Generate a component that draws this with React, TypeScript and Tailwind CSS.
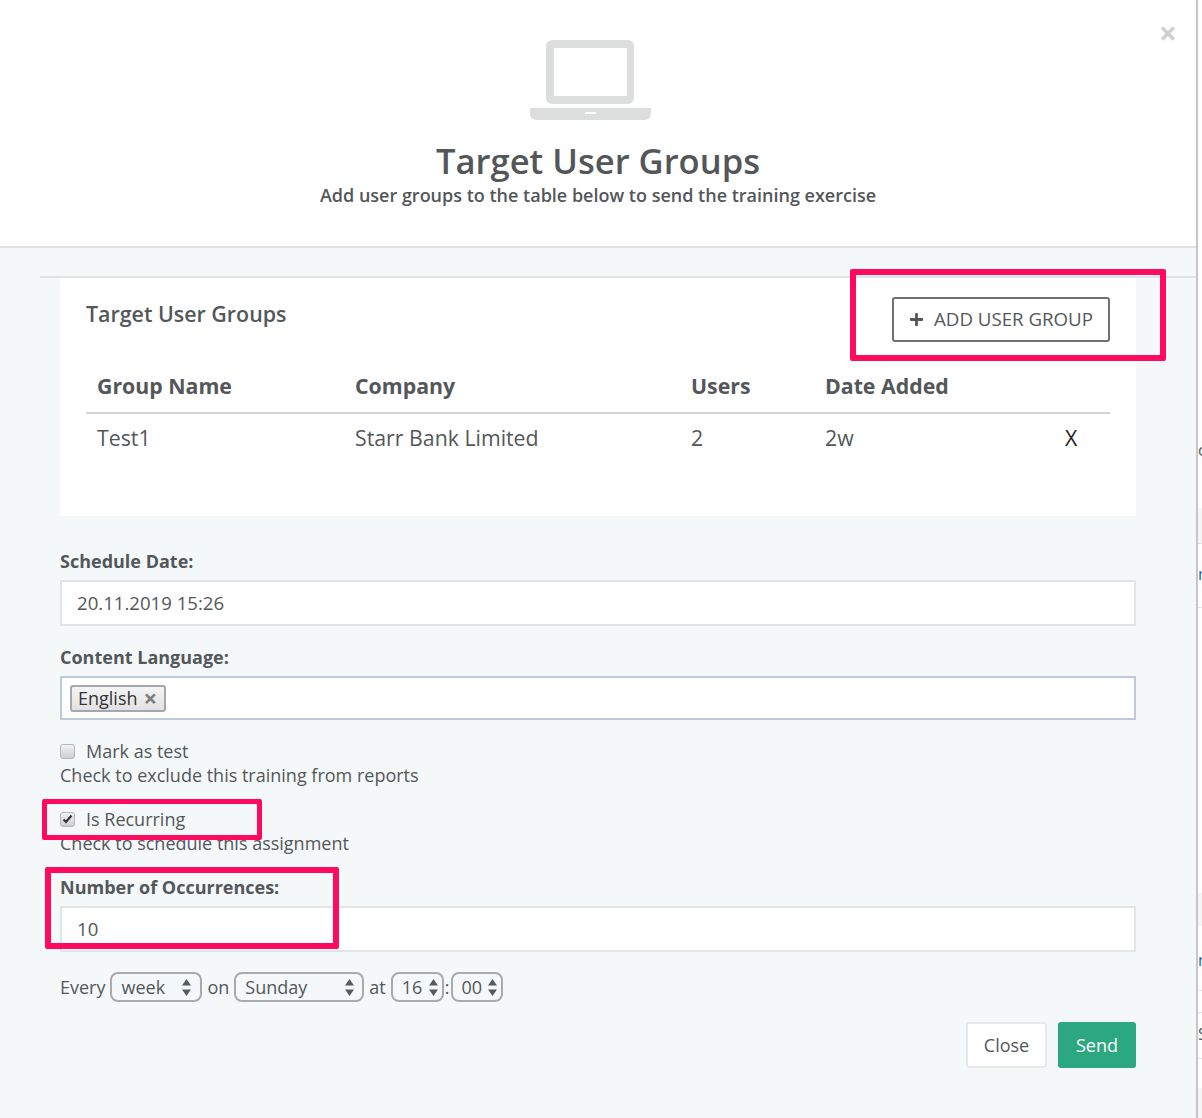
import { FaPlus } from "react-icons/fa";

const rows = [{ name: "Test1", company: "Starr Bank Limited", users: "2", date: "2w" }];

function Laptop() {
  return (
    <svg width="121" height="80" viewBox="0 0 121 80" fill="#dcdddd" className="mr-[16px]">
      <path fillRule="evenodd" d="M22 0h76a6 6 0 0 1 6 6v52a6 6 0 0 1-6 6H22a6 6 0 0 1-6-6V6a6 6 0 0 1 6-6zm2 8v48h73V8H24z" />
      <path d="M0 68h121v6a6 6 0 0 1-6 6H6a6 6 0 0 1-6-6z" />
      <rect x="55" y="72" width="11" height="2" fill="#ffffff" />
    </svg>
  );
}

function Arrows() {
  return (
    <svg width="9" height="17" viewBox="0 0 9 17" fill="#555a5e" className="shrink-0">
      <path d="M4.5 0L9 6.5H0z" />
      <path d="M4.5 17L0 10.5h9z" />
    </svg>
  );
}

function FakeSelect({ value, className }: { value: string; className: string }) {
  return (
    <div className={"flex h-[30px] items-center justify-between rounded-lg border-2 border-[#a9abab] bg-[#f5f8fa] " + className}>
      <span>{value}</span>
      <Arrows />
    </div>
  );
}

function Checkbox({ checked }: { checked?: boolean }) {
  return (
    <div className="flex h-[15px] w-[15px] items-center justify-center rounded-[3px] border border-[#b5b5b5] bg-gradient-to-b from-[#f2f2f2] to-[#cfcfcf]">
      {checked && (
        <svg width="11" height="10" viewBox="0 0 11 10">
          <path d="M1.5 5.5L4 8l5.5-6.5" fill="none" stroke="#333" strokeWidth="2.2" />
        </svg>
      )}
    </div>
  );
}

export default function App() {
  return (
    <div className="relative flex h-[1118px] w-[1202px] overflow-hidden bg-white font-['Open_Sans',sans-serif] text-[18px] text-[#53575a]">
      <div className="flex w-[1196px] shrink-0 flex-col">
        {/* header */}
        <div className="relative flex h-[248px] shrink-0 flex-col items-center border-b-2 border-[#e0e2e2] bg-white pt-10">
          <span className="absolute right-[19px] top-[15px] text-[32px] font-bold leading-[36px] text-[#cfd1d1]">×</span>
          <Laptop />
          <h1 className="mt-[21px] text-[34.6px] font-semibold leading-[40px]">Target User Groups</h1>
          <p className="mt-px text-[18px] font-semibold leading-[26px]">Add user groups to the table below to send the training exercise</p>
        </div>

        {/* body */}
        <div className="flex flex-1 flex-col bg-[#f5f8f9] pl-10 pt-7">
          <div className="border-t-2 border-[#e0e3e4] pl-5 pr-[60px]">
            <div className="flex h-[238px] flex-col bg-white px-[26px]">
              <div className="flex items-start justify-between pt-[19px]">
                <h2 className="mt-[2px] text-[21.4px] font-semibold leading-[30px]">Target User Groups</h2>
                <button className="flex h-[45px] w-[218px] items-center justify-center gap-[10px] rounded-[3px] border-2 border-[#6f7274] bg-white text-[18.7px]">
                  <FaPlus className="text-[15px]" />
                  ADD USER GROUP
                </button>
              </div>
              <table className="mt-[16px] w-full table-fixed text-left text-[21.3px]">
                <thead>
                  <tr className="h-[55px] border-b-2 border-[#d0d2d3]">
                    <th className="w-[258px] pl-[11px] pt-px font-bold">Group Name</th>
                    <th className="w-[336px] pl-[11px] pt-px font-bold">Company</th>
                    <th className="w-[134px] pl-[11px] pt-px font-bold">Users</th>
                    <th className="pl-[11px] pt-px font-bold">Date Added</th>
                    <th className="w-[64px]"></th>
                  </tr>
                </thead>
                <tbody>
                  {rows.map((r) => (
                    <tr key={r.name} className="h-[48px]">
                      <td className="pl-[11px]">{r.name}</td>
                      <td className="pl-[11px]">{r.company}</td>
                      <td className="pl-[11px]">{r.users}</td>
                      <td className="pl-[11px]">{r.date}</td>
                      <td className="pl-[19px] text-[#222]">X</td>
                    </tr>
                  ))}
                </tbody>
              </table>
            </div>

            <div className="mt-[33px] flex flex-col">
              <label className="font-bold leading-[24px]">Schedule Date:</label>
              <div className="mt-[7px] flex h-[46px] items-center border-2 border-[#e2e5e7] bg-white pl-[15px] text-[18.6px]">20.11.2019 15:26</div>

              <label className="mt-[19px] font-bold leading-[24px]">Content Language:</label>
              <div className="mt-[7px] flex h-[44px] items-center border-2 border-[#bccadb] bg-white pl-2">
                <span className="flex h-[27px] w-[96px] items-center gap-[6px] rounded-[3px] border-2 border-[#a5a7a8] bg-gradient-to-b from-[#f4f4f4] to-[#e2e2e2] pl-[6px] text-[#333]">
                  English
                  <span className="text-[24px] font-bold leading-none text-[#7d7d7d]">×</span>
                </span>
              </div>

              <div className="mt-[19px] flex h-[24px] items-center gap-[11px]">
                <Checkbox />
                <span>Mark as test</span>
              </div>
              <p className="leading-[24px]">Check to exclude this training from reports</p>

              <div className="mt-[20px] flex h-[24px] items-center gap-[11px]">
                <Checkbox checked />
                <span>Is Recurring</span>
              </div>
              <p className="leading-[24px]">Check to schedule this assignment</p>

              <label className="mt-[20px] font-bold leading-[24px]">Number of Occurrences:</label>
              <div className="mt-[7px] flex h-[46px] items-center border-2 border-[#e2e5e7] bg-white pl-[15px] text-[18.6px]">10</div>

              <div className="mt-[20px] flex items-center">
                <span>Every</span>
                <FakeSelect value="week" className="ml-[5px] w-[92px] pl-[9px] pr-[9px]" />
                <span className="ml-[5px]">on</span>
                <FakeSelect value="Sunday" className="ml-[5px] w-[130px] pl-[9px] pr-[8px]" />
                <span className="ml-[5px]">at</span>
                <FakeSelect value="16" className="ml-[5px] w-[53px] pl-[9px] pr-[4px]" />
                <span className="mx-px">:</span>
                <FakeSelect value="00" className="w-[52px] pl-[9px] pr-[4px]" />
              </div>

              <div className="mt-[20px] flex justify-end gap-[11px]">
                <button className="h-[46px] w-[81px] rounded-[3px] border-2 border-[#e6e9ea] bg-white">Close</button>
                <button className="h-[46px] w-[78px] rounded-[3px] bg-[#2ba880] text-white">Send</button>
              </div>
            </div>
          </div>
        </div>
      </div>

      {/* page peeking out behind the modal */}
      <div className="flex w-[6px] shrink-0 flex-col overflow-hidden border-l-2 border-[#c4c6c7] bg-white text-[16px]">
        <span className="mt-[438px] leading-[24px] text-[#53575a]">o</span>
        <div className="mt-[46px] h-[36px] shrink-0 border-b border-[#e3e3e3] bg-[#f5f5f5]" />
        <span className="mt-[18px] leading-[24px] text-[#2a66a8]">n</span>
        <div className="mt-[21px] h-px shrink-0 bg-[#e3e3e3]" />
        <div className="mt-[285px] h-[33px] shrink-0 bg-[#f5f5f5]" />
        <span className="mt-[22px] leading-[24px] text-[#2a66a8]">n</span>
        <div className="mt-[18px] h-px shrink-0 bg-[#e3e3e3]" />
        <div className="mt-[21px] h-px shrink-0 bg-[#e3e3e3]" />
        <span className="mt-[9px] leading-[24px] text-[#53575a]">S</span>
        <div className="mt-[12px] h-px shrink-0 bg-[#e3e3e3]" />
        <div className="mt-[29px] h-[32px] shrink-0 bg-[#f5f5f5]" />
      </div>

      {/* annotation boxes */}
      <div className="absolute left-[850px] top-[269px] h-[92px] w-[316px] rounded-[2px] border-[6px] border-[#ff0a5f]" />
      <div className="absolute left-[42px] top-[799px] h-[41px] w-[220px] rounded-[2px] border-[5px] border-[#ff0a5f]" />
      <div className="absolute left-[45px] top-[867px] h-[82px] w-[294px] rounded-[2px] border-[6px] border-[#ff0a5f]" />
    </div>
  );
}
